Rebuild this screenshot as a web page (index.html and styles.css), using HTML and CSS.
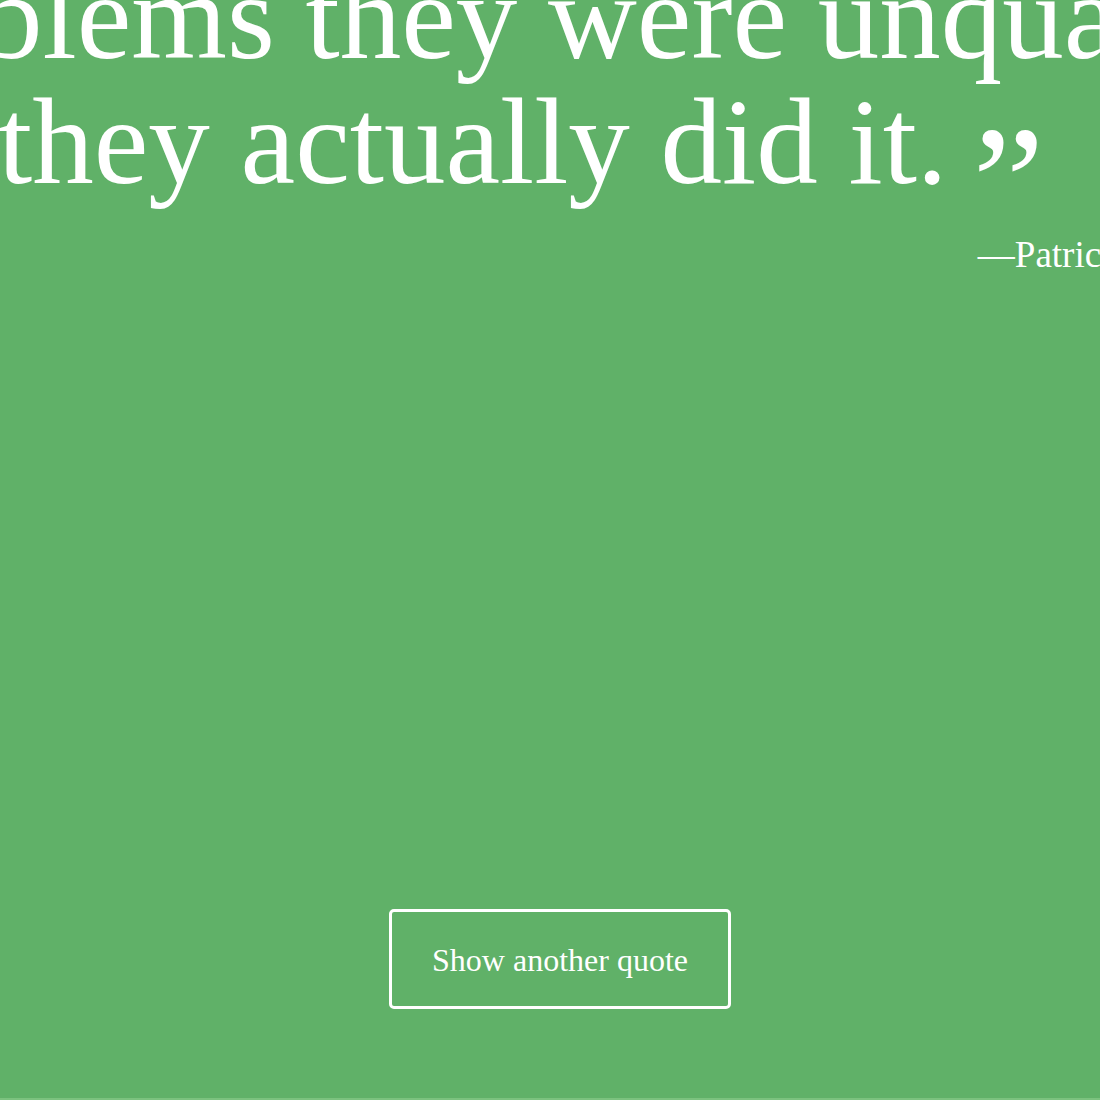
FILE: index.html
```html
<!DOCTYPE html>
<html lang="en">
<head>
<meta charset="utf-8">
<title>Random Quote</title>
<link rel="stylesheet" href="styles.css">
</head>
<body>
  <section class="quote-stage">
    <figure class="quote">
      <blockquote class="quote-text">
        <span class="line">problems they were unqualified to solve, and</span>
        <span class="line">yet they actually did it.<span class="close-mark">”</span></span>
      </blockquote>
      <figcaption class="author">—Patrick McKenzie</figcaption>
    </figure>
  </section>
  <div class="actions">
    <button class="next-btn" type="button">Show another quote</button>
  </div>
</body>
</html>
```

FILE: styles.css
```css
html {
  background: #7cc27f;
  overflow: hidden;
}

body {
  margin: 0;
  min-height: calc(100vh - 2px);
  display: flex;
  flex-direction: column;
  background: #60b168;
  color: #ffffff;
  font-family: "Liberation Serif", "Times New Roman", serif;
}

.quote-stage {
  height: 230px;
  display: flex;
  align-items: center;
  justify-content: center;
}

.quote {
  flex-shrink: 0;
  width: 1466px;
  margin: 0;
}

.quote-text {
  margin: 0;
  font-size: 123px;
  line-height: 125px;
  text-align: left;
}

.line {
  display: block;
  white-space: nowrap;
}

.close-mark {
  margin-left: 25px;
  font-size: 162px;
  line-height: 0;
  vertical-align: -54px;
}

.author {
  margin-top: 29px;
  font-size: 37px;
  text-align: right;
  white-space: nowrap;
}

.actions {
  flex: 1;
  display: flex;
  align-items: flex-end;
  justify-content: center;
  padding-left: 20px;
  padding-bottom: 89px;
}

.next-btn {
  font-family: "Liberation Serif", "Times New Roman", serif;
  font-size: 32px;
  line-height: 36px;
  color: #ffffff;
  background: transparent;
  border: 3px solid #ffffff;
  border-radius: 5px;
  padding: 30px 40px 28px;
  cursor: pointer;
}
```
